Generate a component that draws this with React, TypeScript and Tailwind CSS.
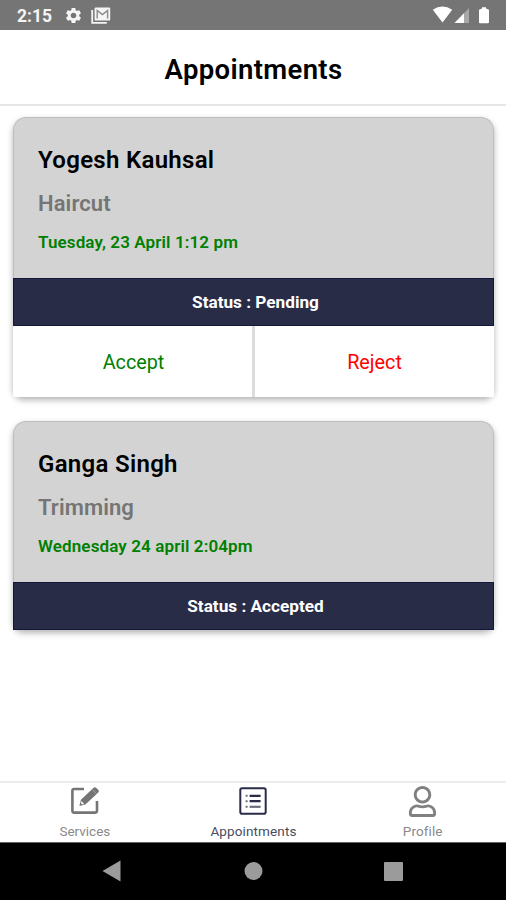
import { FaRegUser } from 'react-icons/fa';
import { MdSettings } from 'react-icons/md';

const appointments = [
    {
        name: 'Yogesh Kauhsal',
        service: 'Haircut',
        time: 'Tuesday, 23 April 1:12 pm',
        status: 'Pending'
    },
    {
        name: 'Ganga Singh',
        service: 'Trimming',
        time: 'Wednesday 24 april 2:04pm',
        status: 'Accepted'
    }
];

function MailStackIcon() {
    return (
        <svg width="20" height="17" viewBox="0 0 20 17" fill="none">
            <path d="M1.2 3v12.8h14.6" stroke="#f5f5f5" strokeWidth="1.8" />
            <rect x="3.6" y="0.4" width="15.6" height="13.2" rx="1.2" fill="#f5f5f5" />
            <path d="M6.2 11.6V3.4l5.2 4.2 5.2-4.2v8.2" stroke="#8a8a8a" strokeWidth="1.4" />
        </svg>
    );
}

function EditIcon() {
    return (
        <svg width="30" height="30" viewBox="0 0 30 30" fill="none">
            <path d="M14 3H4.2a1.8 1.8 0 0 0-1.8 1.8v20a1.8 1.8 0 0 0 1.8 1.8h21a1.8 1.8 0 0 0 1.8-1.8V15" stroke="#757575" strokeWidth="2.6" />
            <path d="M9.4 19.9l1.5-6.1L23.9 1.6a1.6 1.6 0 0 1 2.2.1l2.3 2.4a1.6 1.6 0 0 1-.1 2.3L15.4 18.4z" fill="#757575" />
            <path d="M11.4 15l2.8 2.9-2 .5-1.3-1.3z" fill="#fff" />
            <path d="M22.6 3.7l3.7 4" stroke="#d0d0d0" strokeWidth="0.5" />
        </svg>
    );
}

function ListIcon() {
    return (
        <svg width="28" height="28" viewBox="0 0 28 28" fill="none">
            <rect x="1.3" y="1.3" width="25.4" height="25.4" rx="1.8" stroke="#292c47" strokeWidth="2" />
            <path d="M10.6 8.8h11M10.6 14.2h11" stroke="#292c47" strokeWidth="2.2" />
            <path d="M10.6 19.8h11" stroke="#6d6f80" strokeWidth="2.2" />
            <path d="M6.6 8.8h2M6.6 14.2h2M6.6 19.8h2" stroke="#6d6f80" strokeWidth="2" />
        </svg>
    );
}

export default function App() {
    return (
        <div className="w-[506px] h-[900px] flex flex-col bg-white overflow-hidden font-['Roboto',sans-serif]">

            {/* Status bar */}
            <div className="h-[30px] bg-[#757575] flex items-center pl-[17px] pr-4 text-[#f5f5f5] shrink-0">
                <span className="text-[17.5px] leading-[30px] font-bold w-[47px] pt-[2px]">2:15</span>
                <MdSettings size={19} />
                <div className="ml-2">
                    <MailStackIcon />
                </div>
                <svg className="ml-auto" width="58" height="18" viewBox="0 0 58 18">
                    <path d="M0.8 3.8Q10.5-2.6 20.2 3.8L10.5 16.6z" fill="#fff" />
                    <path d="M37 2v15H22.5z" fill="#a8a8a8" />
                    <path d="M32 7.2V17h-9.5z" fill="#fff" />
                    <path d="M50 1.2h4V2.4l3 1.4v12.4a1 1 0 0 1-1 1h-8a1 1 0 0 1-1-1V3.8l3-1.4z" fill="#fff" />
                </svg>
            </div>

            {/* Header */}
            <header className="h-[76px] border-b-2 border-[#e6e6e6] flex items-center justify-center shrink-0">
                <h1 className="text-[27.5px] font-semibold tracking-[0.35px] text-black pt-[5px] pl-px">Appointments</h1>
            </header>

            <main className="flex-1 flex flex-col gap-6 px-3 pt-[11px]">
                {appointments.map((item) => (
                    <section key={item.name} className="ml-px rounded-t-[13px] rounded-b-[10px] shadow-[0_3px_6px_rgba(0,0,0,0.3)]">
                        <div className="h-[161px] rounded-t-[13px] bg-[#d3d3d3] border border-b-0 border-[#bdbdbd] pl-6 pt-[25px]">
                            <h2 className="text-[24px] leading-[34px] font-semibold tracking-[0.3px] text-black">{item.name}</h2>
                            <p className="mt-[12px] text-[22px] leading-[30px] font-semibold tracking-[0.1px] text-[#757575]">{item.service}</p>
                            <p className="mt-[11px] text-[17px] leading-6 font-semibold tracking-[0.12px] text-[#008000]">{item.time}</p>
                        </div>
                        <div className="h-12 bg-[#292c47] border border-[#14163a] flex items-center justify-center text-white text-[17.2px] font-bold pt-px pl-[4px]">
                            Status : {item.status}
                        </div>
                        {item.status === 'Pending' && (
                            <div className="h-[71px] flex bg-white text-[19.8px] rounded-b-[2px]">
                                <button className="w-[242px] border-r-[3px] border-[#dcdcdc] text-[#008000] pt-[2px] pl-[2px]">Accept</button>
                                <button className="flex-1 text-[#ff0000] pt-[2px]">Reject</button>
                            </div>
                        )}
                    </section>
                ))}
            </main>

            {/* Tab bar */}
            <nav className="h-[61px] border-t-2 border-[#ececec] grid grid-cols-3 text-[13.5px] leading-4 text-[#8a8a8a] shrink-0">
                <div className="flex flex-col items-center pl-px">
                    <div className="h-[40px] pt-[3px]">
                        <EditIcon />
                    </div>
                    Services
                </div>
                <div className="flex flex-col items-center text-[#4a4c5e] pl-px">
                    <div className="h-[40px] pt-1">
                        <ListIcon />
                    </div>
                    <span className="tracking-[0.12px]">Appointments</span>
                </div>
                <div className="flex flex-col items-center pl-[2px]">
                    <div className="h-[40px] pt-[3px]">
                        <FaRegUser size={31} color="#808080" />
                    </div>
                    <span className="tracking-[0.1px]">Profile</span>
                </div>
            </nav>

            {/* Android navigation buttons */}
            <div className="h-[58px] bg-black border-t border-[#666] flex items-center justify-center pb-[2px] shrink-0">
                <svg width="302" height="22" viewBox="0 0 302 22" fill="#9b9b9b">
                    <path d="M0.5 11L18.5 0.5v21z" />
                    <circle cx="151.5" cy="11" r="9" />
                    <rect x="282" y="2" width="19" height="19" rx="1" />
                </svg>
            </div>
        </div>
    );
}
